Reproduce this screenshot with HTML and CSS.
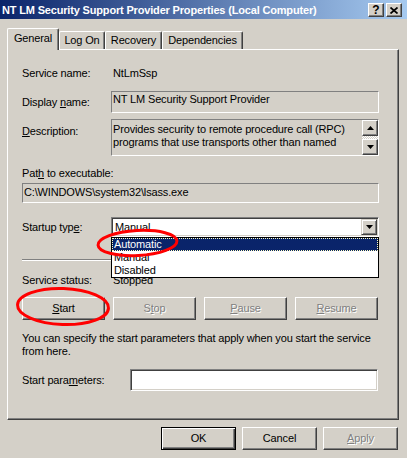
FILE: index.html
```html
<!DOCTYPE html>
<html>
<head>
<meta charset="utf-8">
<link rel="stylesheet" href="styles.css">
</head>
<body>
<div class="window">
  <div class="titlebar">
    <span class="title">NT LM Security Support Provider Properties (Local Computer)</span>
    <div class="tb-buttons">
      <div class="tb-btn help">?</div>
      <div class="tb-btn close">
        <svg width="8" height="7" viewBox="0 0 8 7"><path d="M0.5 0.5 L7.5 6.5 M7.5 0.5 L0.5 6.5" stroke="#000" stroke-width="1.7" fill="none"/></svg>
      </div>
    </div>
  </div>
  <div class="main">
    <div class="tabs">
      <div class="tab active t-general">General</div>
      <div class="tab t-logon">Log On</div>
      <div class="tab t-recovery">Recovery</div>
      <div class="tab t-deps">Dependencies</div>
    </div>
    <div class="panel">
      <div class="row r-name"><span class="label">Service name:</span><span class="value">NtLmSsp</span></div>
      <div class="row r-display"><span class="label">Display <u>n</u>ame:</span><div class="field display-field">NT LM Security Support Provider</div></div>
      <div class="row r-desc"><span class="label desc-label"><u>D</u>escription:</span>
        <div class="field desc-field">
          <div class="desc-text">Provides security to remote procedure call (RPC)<br>programs that use transports other than named</div>
          <div class="scrollbar">
            <div class="sb-btn"><svg width="7" height="4" viewBox="0 0 7 4"><polygon points="3.5,0 7,4 0,4" fill="#000"/></svg></div>
            <div class="sb-track"></div>
            <div class="sb-btn"><svg width="7" height="4" viewBox="0 0 7 4"><polygon points="0,0 7,0 3.5,4" fill="#000"/></svg></div>
          </div>
        </div>
      </div>
      <div class="path-label">Pat<u>h</u> to executable:</div>
      <div class="field path-field">C:\WINDOWS\system32\lsass.exe</div>
      <div class="row r-startup"><span class="label">Startup typ<u>e</u>:</span>
        <div class="select">
          <span class="select-value">Manual</span>
          <div class="select-arrow"><svg width="7" height="4" viewBox="0 0 7 4"><polygon points="0,0 7,0 3.5,4" fill="#000"/></svg></div>
          <div class="dropdown">
            <div class="opt selected">Automatic</div>
            <div class="opt">Manual</div>
            <div class="opt">Disabled</div>
          </div>
        </div>
      </div>
      <div class="separator"></div>
      <div class="row r-status"><span class="label">Service status:</span><span class="value">Stopped</span></div>
      <div class="svc-buttons">
        <div class="btn svc"><span><u>S</u>tart</span></div>
        <div class="btn svc disabled"><span>S<u>t</u>op</span></div>
        <div class="btn svc disabled"><span><u>P</u>ause</span></div>
        <div class="btn svc disabled"><span><u>R</u>esume</span></div>
      </div>
      <p class="hint">You can specify the start parameters that apply when you start the service<br>from here.</p>
      <div class="row r-params"><span class="label params-label">Start para<u>m</u>eters:</span><div class="input"></div></div>
    </div>
    <div class="dialog-buttons">
      <div class="btn dlg default">OK</div>
      <div class="btn dlg">Cancel</div>
      <div class="btn dlg disabled"><span><u>A</u>pply</span></div>
    </div>
  </div>
  <svg class="annotations" width="407" height="458" viewBox="0 0 407 458">
    <ellipse cx="137.5" cy="243" rx="39.5" ry="12.5" fill="none" stroke="#ff0000" stroke-width="3" transform="rotate(-3 137.5 243)"/>
    <ellipse cx="63" cy="306.5" rx="45.5" ry="18" fill="none" stroke="#ff0000" stroke-width="3" transform="rotate(2 63 306.5)"/>
  </svg>
</div>
</body>
</html>
```
FILE: styles.css
```css
* { box-sizing: border-box; }
html, body { margin: 0; padding: 0; }
body {
  width: 407px;
  height: 458px;
  overflow: hidden;
  background: #d4d0c8;
  font-family: "Liberation Sans", Arial, sans-serif;
  font-size: 11px;
  letter-spacing: -0.15px;
  color: #000;
}
.window {
  position: relative;
  width: 407px;
  height: 458px;
  background: #d4d0c8;
}
.titlebar {
  height: 19px;
  background: linear-gradient(to right, #0a246a, #a6caf0);
  display: flex;
  justify-content: space-between;
  align-items: flex-start;
}
.title {
  color: #fff;
  font-weight: bold;
  font-size: 11px;
  line-height: 13px;
  letter-spacing: -0.17px;
  padding: 4px 0 0 2px;
  white-space: nowrap;
}
.tb-buttons {
  display: flex;
  gap: 2px;
  margin: 3px 5px 0 0;
}
.tb-btn {
  width: 16px;
  height: 14px;
  background: #d4d0c8;
  border: 1px solid;
  border-color: #fff #404040 #404040 #fff;
  box-shadow: inset -1px -1px #808080;
  display: flex;
  align-items: center;
  justify-content: center;
}
.help {
  font-weight: bold;
  font-size: 12px;
  line-height: 12px;
  letter-spacing: 0;
}
.main {
  padding: 0 8px 0 7px;
}
.tabs {
  display: flex;
  align-items: flex-end;
  height: 21px;
  margin-top: 9px;
}
.tab {
  height: 18px;
  padding-top: 2px;
  line-height: 13px;
  text-align: center;
  white-space: nowrap;
  border-left: 1px solid #fff;
  border-top: 1px solid #fff;
  border-right: 1px solid #404040;
  box-shadow: inset -1px 0 #808080;
  border-radius: 2px 2px 0 0;
  background: #d4d0c8;
}
.tab.active {
  height: 22px;
  padding-top: 3px;
  margin-bottom: -1px;
  position: relative;
  z-index: 1;
}
.t-general { width: 52px; }
.t-logon { width: 46px; }
.t-recovery { width: 57px; }
.t-deps { width: 81px; }
.panel {
  height: 371px;
  border: 1px solid;
  border-color: #fff #404040 #404040 #fff;
  box-shadow: inset -1px -1px #808080;
  padding: 0 0 0 14px;
}
.row {
  display: flex;
  align-items: center;
}
.label {
  width: 89px;
  flex: none;
  line-height: 13px;
  white-space: nowrap;
}
.value {
  padding-left: 2px;
  line-height: 13px;
}
.field {
  border: 1px solid;
  border-color: #808080 #fff #fff #808080;
  line-height: 13px;
  white-space: nowrap;
}
.r-name { margin-top: 16px; height: 14px; }
.r-display { margin-top: 11px; height: 22px; }
.display-field { width: 268px; height: 22px; padding: 1px 0 0 1px; }
.r-desc { margin-top: 6px; height: 37px; align-items: flex-start; }
.desc-label { padding-top: 6px; }
.desc-field {
  width: 268px;
  height: 37px;
  display: flex;
}
.desc-text { flex: 1; padding: 3px 0 0 1px; overflow: hidden; }
.scrollbar {
  width: 16px;
  display: flex;
  flex-direction: column;
}
.sb-btn {
  width: 16px;
  height: 16px;
  background: #d4d0c8;
  border: 1px solid;
  border-color: #fff #404040 #404040 #fff;
  box-shadow: inset -1px -1px #808080;
  display: flex;
  align-items: center;
  justify-content: center;
}
.sb-track {
  height: 3px;
  background: repeating-conic-gradient(#fff 0 25%, #d4d0c8 0 50%) 0 0 / 2px 2px;
}
.path-label { margin-top: 11px; line-height: 13px; }
.path-field { margin-top: 3px; width: 357px; height: 20px; padding: 2px 0 0 1px; }
.r-startup { margin-top: 14px; height: 20px; }
.select {
  position: relative;
  width: 268px;
  height: 20px;
  background: #fff;
  border: 1px solid;
  border-color: #808080 #fff #fff #808080;
  box-shadow: inset 1px 1px #404040, inset -1px -1px #d4d0c8;
  padding: 1px;
  display: flex;
}
.select-value { flex: 1; padding-left: 2px; line-height: 16px; }
.select-arrow {
  width: 16px;
  height: 16px;
  background: #d4d0c8;
  border: 1px solid;
  border-color: #d4d0c8 #404040 #404040 #d4d0c8;
  box-shadow: inset 1px 1px #fff, inset -1px -1px #808080;
  display: flex;
  align-items: center;
  justify-content: center;
}
.dropdown {
  position: absolute;
  top: 19px;
  left: -1px;
  width: 268px;
  background: #fff;
  border: 1px solid #000;
  z-index: 2;
}
.opt {
  height: 13px;
  line-height: 13px;
  padding-left: 2px;
}
.opt.selected {
  background: #0a246a;
  color: #fff;
  outline: 1px dotted #ffffc0;
  outline-offset: -1px;
}
.separator {
  margin-top: 22px;
  width: 357px;
  height: 2px;
  border-top: 1px solid #808080;
  border-bottom: 1px solid #fff;
}
.r-status { margin-top: 12px; height: 14px; }
.svc-buttons {
  margin-top: 10px;
  width: 356px;
  display: flex;
  justify-content: space-between;
}
.btn {
  height: 23px;
  background: #d4d0c8;
  border: 1px solid;
  border-color: #fff #404040 #404040 #fff;
  box-shadow: inset -1px -1px #808080;
  display: flex;
  align-items: center;
  justify-content: center;
  line-height: 13px;
}
.svc { width: 83px; }
.disabled {
  color: #808080;
  text-shadow: 1px 1px 0 #fff;
}
.hint {
  margin: 12px 0 0 0;
  line-height: 13px;
  white-space: nowrap;
}
.r-params { margin-top: 11px; height: 22px; }
.params-label { width: 108px; }
.input {
  width: 248px;
  height: 22px;
  background: #fff;
  border: 1px solid;
  border-color: #808080 #fff #fff #808080;
  box-shadow: inset 1px 1px #404040, inset -1px -1px #d4d0c8;
}
.dialog-buttons {
  margin-top: 7px;
  margin-right: 1px;
  display: flex;
  justify-content: flex-end;
  gap: 6px;
}
.dlg { width: 75px; }
.dlg.default {
  border: 1px solid #000;
  box-shadow: inset 1px 1px #fff, inset -1px -1px #404040, inset -2px -2px #808080;
}
.annotations {
  position: absolute;
  top: 0;
  left: 0;
  pointer-events: none;
  z-index: 5;
}
```
